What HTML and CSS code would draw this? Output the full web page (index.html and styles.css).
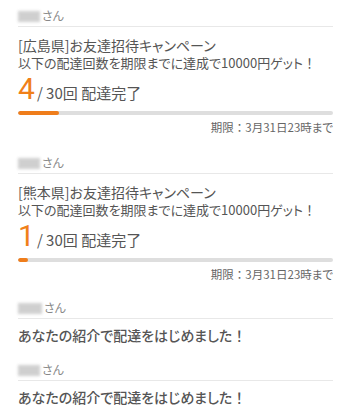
FILE: index.html
```html
<!DOCTYPE html>
<html lang="ja">
<head>
<meta charset="utf-8">
<link rel="stylesheet" href="styles.css">
</head>
<body>
<div class="list">
  <section class="entry first">
    <div class="name"><span class="blur b1"></span><span>さん</span></div>
    <p class="title">[広島県]お友達招待キャンペーン</p>
    <p class="sub">以下の配達回数を期限までに達成で10000円ゲット<span class="fw">！</span></p>
    <div class="count"><span class="num">4</span><span class="of">/ 30回 配達完了</span></div>
    <div class="bar"><div class="fill" style="width:13%"></div></div>
    <p class="deadline">期限<span class="fw">：</span>3月31日23時まで</p>
  </section>
  <section class="entry">
    <div class="name"><span class="blur b2"></span><span>さん</span></div>
    <p class="title">[熊本県]お友達招待キャンペーン</p>
    <p class="sub">以下の配達回数を期限までに達成で10000円ゲット<span class="fw">！</span></p>
    <div class="count"><span class="num">1</span><span class="of">/ 30回 配達完了</span></div>
    <div class="bar"><div class="fill" style="width:3.3%"></div></div>
    <p class="deadline">期限<span class="fw">：</span>3月31日23時まで</p>
  </section>
  <section class="entry notice">
    <div class="name"><span class="blur b3"></span><span>さん</span></div>
    <p class="msg">あなたの紹介で配達をはじめました<span class="fw">！</span></p>
  </section>
  <section class="entry notice">
    <div class="name"><span class="blur b4"></span><span>さん</span></div>
    <p class="msg">あなたの紹介で配達をはじめました<span class="fw">！</span></p>
  </section>
</div>
</body>
</html>
```
FILE: styles.css
```css
* { box-sizing: border-box; }
body {
  margin: 0;
  background: #fff;
  font-family: "Noto Sans CJK JP", "Noto Sans", sans-serif;
  font-feature-settings: "palt";
  color: #555;
}
p { margin: 0; }
.fw { font-feature-settings: normal; }
.list { padding: 0 17px 0 18px; }
.entry { padding-top: 20px; }
.entry.first { padding-top: 8px; }
.entry.notice { padding-top: 18px; }
.name {
  display: flex;
  align-items: center;
  gap: 2px;
  font-size: 12px;
  line-height: 16px;
  color: #888;
  padding-bottom: 2px;
  border-bottom: 1px solid #e8e8e8;
}
.blur {
  display: inline-block;
  height: 11px;
  background: #c4c4c4;
  filter: blur(1.5px);
  opacity: 0.8;
}
.b1 { width: 22px; }
.b2 { width: 22px; }
.b3 { width: 24px; }
.b4 { width: 22px; }
.title {
  margin-top: 9px;
  font-size: 14px;
  line-height: 18px;
  color: #555;
}
.sub {
  font-size: 13px;
  line-height: 17px;
  color: #555;
}
.count {
  margin-top: 3px;
  display: flex;
  align-items: baseline;
  height: 30px;
  line-height: 30px;
}
.num {
  font-family: Roboto, "Noto Sans", sans-serif;
  font-size: 30px;
  font-weight: 400;
  color: #f08019;
  margin-right: 2px;
}
.of {
  font-size: 15px;
  color: #555;
}
.bar {
  margin-top: 7px;
  height: 4px;
  border-radius: 2px;
  background: #dedede;
  overflow: hidden;
}
.fill {
  height: 100%;
  background: #ef7d1b;
  border-radius: 2px;
}
.deadline {
  margin-top: 4px;
  text-align: right;
  font-size: 11.5px;
  line-height: 16px;
  color: #666;
}
.msg {
  margin-top: 7px;
  font-size: 14px;
  line-height: 18px;
  font-weight: 500;
  color: #555;
}
```
